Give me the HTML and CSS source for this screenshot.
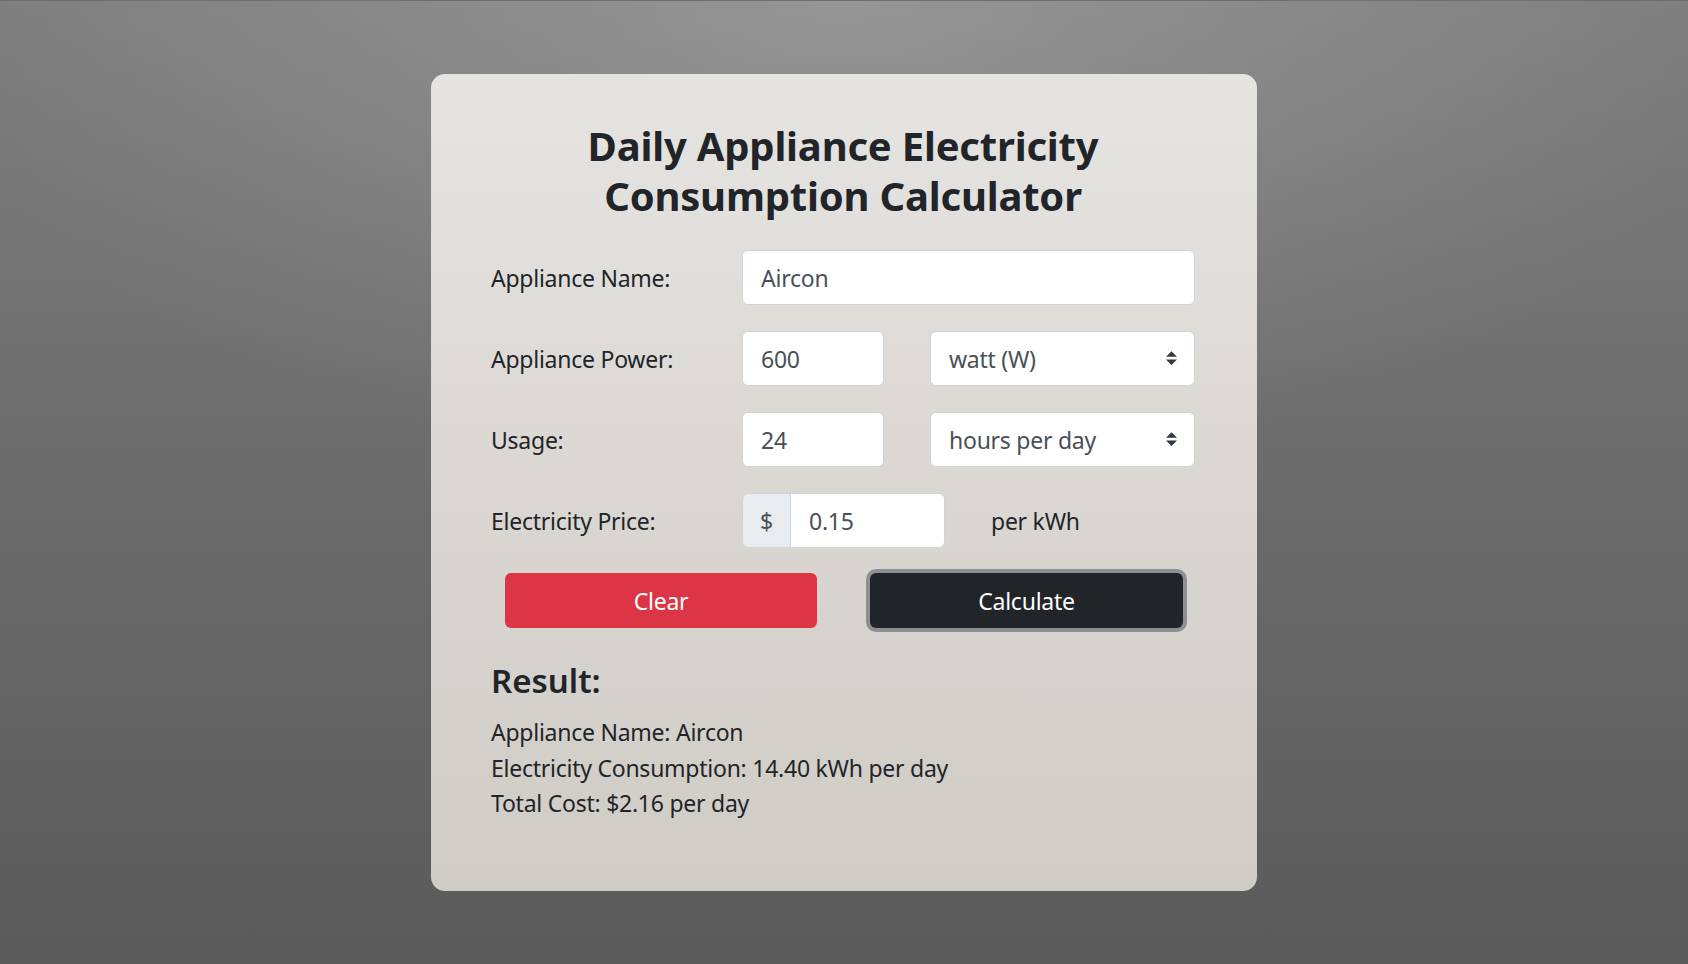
FILE: index.html
```html
<!DOCTYPE html>
<html lang="en">
<head>
<meta charset="utf-8">
<title>Daily Appliance Electricity Consumption Calculator</title>
<link rel="stylesheet" href="styles.css">
</head>
<body>
<main class="page">
  <section class="card">
    <h1 class="title">Daily Appliance Electricity Consumption Calculator</h1>
    <form class="calc">
      <div class="row">
        <label class="label" for="name">Appliance Name:</label>
        <input class="control control-wide" id="name" type="text" value="Aircon">
      </div>
      <div class="row">
        <label class="label" for="power">Appliance Power:</label>
        <input class="control control-num" id="power" type="text" value="600">
        <div class="select-wrap">
          <select class="control control-select"><option>watt (W)</option><option>kilowatt (kW)</option></select>
          <svg class="select-arrow" viewBox="0 0 4 5" width="11" height="14"><path fill="#343a40" d="M2 0L0 2h4zm0 5L0 3h4z"/></svg>
        </div>
      </div>
      <div class="row">
        <label class="label" for="usage">Usage:</label>
        <input class="control control-num" id="usage" type="text" value="24">
        <div class="select-wrap">
          <select class="control control-select"><option>hours per day</option><option>minutes per day</option></select>
          <svg class="select-arrow" viewBox="0 0 4 5" width="11" height="14"><path fill="#343a40" d="M2 0L0 2h4zm0 5L0 3h4z"/></svg>
        </div>
      </div>
      <div class="row">
        <label class="label" for="price">Electricity Price:</label>
        <div class="input-group">
          <span class="addon">$</span>
          <input class="control control-price" id="price" type="text" value="0.15">
        </div>
        <span class="unit">per kWh</span>
      </div>
      <div class="buttons">
        <button type="button" class="btn btn-clear">Clear</button>
        <button type="button" class="btn btn-calc">Calculate</button>
      </div>
    </form>
    <div class="result">
      <h3 class="result-title">Result:</h3>
      <p class="result-line">Appliance Name: Aircon</p>
      <p class="result-line">Electricity Consumption: 14.40 kWh per day</p>
      <p class="result-line">Total Cost: $2.16 per day</p>
    </div>
  </section>
</main>
</body>
</html>
```
FILE: styles.css
```css
* { box-sizing: border-box; }
html, body { margin: 0; height: 100%; }
body {
  font-family: "Noto Sans", "Open Sans", sans-serif;
  color: #212529;
  background:
    radial-gradient(ellipse 55% 50% at 50% 0%, rgba(255,255,255,0.19), rgba(255,255,255,0) 100%),
    linear-gradient(to bottom, #7d7d7d 0%, #5a5a5a 100%);
  border-top: 1px solid #6e6e6e;
}
.page {
  display: flex;
  justify-content: center;
  padding-top: 73px;
}
.card {
  width: 826px;
  height: 817px;
  padding: 47px 62px 0 60px;
  border-radius: 14px;
  background: linear-gradient(to bottom, #e6e4e1 0%, #cfcbc5 100%);
}
.title {
  margin: 0 0 29px;
  text-align: center;
  font-size: 40px;
  line-height: 50px;
  font-weight: 700;
  letter-spacing: -0.2px;
  padding: 0 60px;
}
.calc { display: flex; flex-direction: column; }
.row {
  display: flex;
  align-items: center;
  height: 55px;
  margin-bottom: 26px;
}
.label {
  width: 251px;
  flex: none;
  font-size: 23px;
  letter-spacing: -0.25px;
  line-height: 34px;
}
.control {
  height: 55px;
  border: 1px solid #ced4da;
  border-radius: 6px;
  background: #fff;
  font-family: inherit;
  font-size: 23px;
  letter-spacing: -0.25px;
  color: #495057;
  padding: 0 18px;
  outline: none;
}
.control-wide { width: 453px; }
.control-num { width: 142px; }
.select-wrap {
  position: relative;
  margin-left: 46px;
  width: 265px;
}
.control-select {
  width: 265px;
  appearance: none;
  -webkit-appearance: none;
  padding-right: 40px;
  color: #495057;
}
.select-arrow {
  position: absolute;
  right: 18px;
  top: 20px;
  pointer-events: none;
}
.input-group { display: flex; }
.addon {
  width: 48px;
  height: 55px;
  display: flex;
  align-items: center;
  justify-content: center;
  background: #e9ecef;
  border: 1px solid #ced4da;
  border-right: none;
  border-radius: 6px 0 0 6px;
  font-size: 23px;
  color: #495057;
}
.control-price {
  width: 155px;
  border-radius: 0 6px 6px 0;
}
.unit {
  margin-left: 46px;
  font-size: 23px;
  letter-spacing: -0.25px;
}
.buttons {
  display: grid;
  grid-template-columns: 312px 313px;
  column-gap: 53px;
  padding-left: 14px;
  margin-top: -1px;
}
.btn {
  height: 55px;
  border: none;
  border-radius: 6px;
  font-family: inherit;
  font-size: 23px;
  letter-spacing: -0.25px;
  color: #fff;
  cursor: pointer;
}
.btn-clear { background: #dc3545; }
.btn-calc {
  background: #212529;
  box-shadow: 0 0 0 4px rgba(82, 88, 93, 0.55);
}
.result { margin-top: 33px; }
.result-title {
  margin: 0 0 14px;
  font-size: 33px;
  line-height: 40px;
  font-weight: 600;
}
.result-line {
  margin: 0;
  font-size: 23px;
  letter-spacing: -0.25px;
  line-height: 35.5px;
}
```
